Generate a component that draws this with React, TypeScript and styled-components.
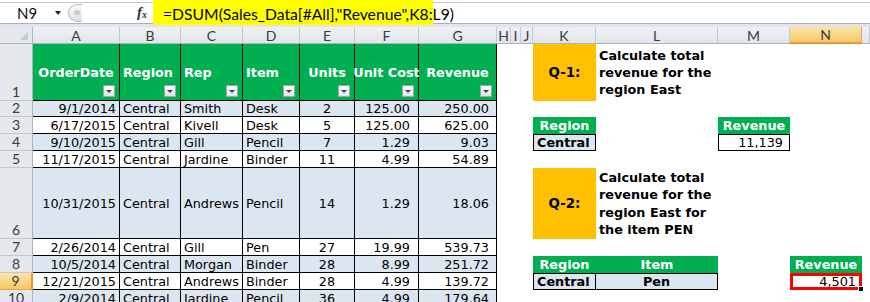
import React from "react";
import styled, { createGlobalStyle, css } from "styled-components";

const GlobalStyle = createGlobalStyle`
  html, body {
    margin: 0;
    padding: 0;
    background: #ffffff;
    overflow: hidden;
  }
  body {
    font-family: "DejaVu Sans", Verdana, sans-serif;
  }
`;

type Align = "left" | "center" | "right";

const colWidths = [87, 61, 62, 57, 55, 64, 78, 14, 10, 12, 63, 122, 72, 72];
const rowHeights = [57, 16, 17, 17, 17, 71, 17, 17, 17, 17];
const letters = "ABCDEFGHIJKLMN".split("");

const activeCol = "N";
const activeRow = 9;

const headers: [string, Align][] = [
  ["OrderDate", "center"],
  ["Region", "left"],
  ["Rep", "left"],
  ["Item", "left"],
  ["Units", "center"],
  ["Unit Cost", "center"],
  ["Revenue", "center"],
];

const dataCols: { align: Align; pad?: number }[] = [
  { align: "right" },
  { align: "left" },
  { align: "left" },
  { align: "left" },
  { align: "center" },
  { align: "right", pad: 8 },
  { align: "right", pad: 7 },
];

const sales = [
  ["9/1/2014", "Central", "Smith", "Desk", "2", "125.00", "250.00"],
  ["6/17/2015", "Central", "Kivell", "Desk", "5", "125.00", "625.00"],
  ["9/10/2015", "Central", "Gill", "Pencil", "7", "1.29", "9.03"],
  ["11/17/2015", "Central", "Jardine", "Binder", "11", "4.99", "54.89"],
  ["10/31/2015", "Central", "Andrews", "Pencil", "14", "1.29", "18.06"],
  ["2/26/2014", "Central", "Gill", "Pen", "27", "19.99", "539.73"],
  ["10/5/2014", "Central", "Morgan", "Binder", "28", "8.99", "251.72"],
  ["12/21/2015", "Central", "Andrews", "Binder", "28", "4.99", "139.72"],
  ["2/9/2014", "Central", "Jardine", "Pencil", "36", "4.99", "179.64"],
];

const Window = styled.div`
  width: 870px;
  height: 302px;
  overflow: hidden;
`;

const FormulaRow = styled.div`
  display: flex;
  align-items: center;
  height: 24px;
  box-sizing: border-box;
  border-bottom: 1px solid #a9b1bb;
  background: linear-gradient(#ffffff 0 2px, #c4c9d0 2px 3px, #ffffff 3px);
`;

const NameBox = styled.div`
  display: flex;
  align-items: center;
  justify-content: space-between;
  width: 64px;
  height: 100%;
  box-sizing: border-box;
  padding: 2px 3px 0 17px;
  font-family: Lato, "Liberation Sans", sans-serif;
  font-size: 15px;
  color: #111;
`;

const Caret = styled.span`
  width: 0;
  height: 0;
  border-left: 3.5px solid transparent;
  border-right: 3.5px solid transparent;
  border-top: 4px solid #222;
`;

const Splitter = styled.span`
  position: relative;
  margin: 2px 0 0 4px;
  width: 14px;
  height: 18px;
  box-sizing: border-box;
  border: 1px solid #b4b9c0;
  border-right: none;
  border-radius: 9px 0 0 9px;
  background: linear-gradient(#fbfbfb, #dcdfe3);
  &::after {
    content: "";
    position: absolute;
    left: 5px;
    top: 5px;
    width: 6px;
    height: 5px;
    border-radius: 50%;
    background: #c9ccd1;
  }
`;

const Fx = styled.span`
  margin: 2px 0 0 55px;
  font-family: "Liberation Serif", serif;
  font-style: italic;
  font-weight: bold;
  font-size: 15px;
  color: #333;
  sub {
    font-size: 10px;
    vertical-align: -1px;
  }
`;

const Formula = styled.div`
  align-self: stretch;
  margin: 0 0 -2px 6px;
  width: 280px;
  box-sizing: border-box;
  padding: 2px 0 0 10px;
  display: flex;
  align-items: center;
  background: #ffff00;
  font-family: Lato, "Liberation Sans", sans-serif;
  font-size: 15.7px;
  color: #000;
  white-space: nowrap;
`;

const Spacer = styled.div`
  height: 3px;
  background: #e1e5ea;
`;

const Sheet = styled.div`
  display: grid;
  grid-template-columns: 33px ${colWidths.map((w) => `${w}px`).join(" ")} 1fr;
  grid-template-rows: 17px ${rowHeights.map((h) => `${h}px`).join(" ")};
`;

const Corner = styled.div`
  position: relative;
  background: #e4e8ed;
  border-right: 1px solid #a9b4c2;
  border-bottom: 1px solid #a9b4c2;
  &::after {
    content: "";
    position: absolute;
    right: 4px;
    bottom: 3px;
    border-left: 8px solid transparent;
    border-bottom: 8px solid #c6cad0;
  }
`;

const activeHead = css`
  background: linear-gradient(#fbe4ab, #f6c865);
  border-color: #e2a848;
`;

const ColHead = styled.div<{ $active?: boolean }>`
  display: flex;
  align-items: center;
  justify-content: center;
  box-sizing: border-box;
  font-family: Lato, "Liberation Sans", sans-serif;
  font-size: 14px;
  color: #3b3b3b;
  background: linear-gradient(#eef1f4, #e1e5ea);
  border-right: 1px solid #c2c8d0;
  border-bottom: 1px solid #a9b4c2;
  ${(p) => p.$active && activeHead}
  ${(p) => p.$active && "border-bottom: 2px solid #f29436;"}
`;

const RowHead = styled.div<{ $active?: boolean }>`
  display: flex;
  align-items: flex-end;
  justify-content: center;
  box-sizing: border-box;
  font-family: Lato, "Liberation Sans", sans-serif;
  font-size: 14px;
  line-height: 16px;
  color: #3b3b3b;
  background: #e4e8ed;
  border-right: 1px solid #a9b4c2;
  border-bottom: 1px solid #c2c8d0;
  ${(p) => p.$active && activeHead}
  ${(p) => p.$active && "border-right: 2px solid #f29436;"}
`;

const Cell = styled.div<{ $align?: Align; $bg?: string; $bold?: boolean; $pad?: number }>`
  position: relative;
  display: flex;
  align-items: center;
  justify-content: ${(p) =>
    p.$align === "right" ? "flex-end" : p.$align === "center" ? "center" : "flex-start"};
  box-sizing: border-box;
  min-width: 0;
  padding: ${(p) => (p.$align === "center" ? "0" : `0 ${p.$pad ?? 3}px 0 3px`)};
  background: ${(p) => p.$bg ?? "#ffffff"};
  font-size: 12.8px;
  font-weight: ${(p) => (p.$bold ? "bold" : "normal")};
  color: #000;
  white-space: nowrap;
`;

const TableCell = styled(Cell)`
  border-right: 1px solid #000;
  border-bottom: 1px solid #000;
`;

const HeadCell = styled(TableCell)`
  background: #00b050;
  color: #ffffff;
  font-weight: bold;
`;

const Drop = styled.span`
  position: absolute;
  right: 4px;
  bottom: 3px;
  width: 12px;
  height: 12px;
  box-sizing: border-box;
  border: 1px solid #a5a5a5;
  background: linear-gradient(#fafafa, #e3e3e3);
  display: flex;
  align-items: center;
  justify-content: center;
  &::after {
    content: "";
    border-left: 3px solid transparent;
    border-right: 3px solid transparent;
    border-top: 3px solid #444;
  }
`;

const Blank = styled.div`
  background: #ffffff;
`;

const Tag = styled(Cell)`
  justify-content: center;
  background: #ffc000;
  font-weight: bold;
  font-size: 13.4px;
`;

const Question = styled(Cell)`
  flex-direction: column;
  align-items: flex-start;
  justify-content: center;
  font-weight: bold;
  line-height: 17.3px;
  z-index: 1;
`;

const Label = styled(Cell)`
  justify-content: center;
  background: #00b050;
  color: #ffffff;
  font-weight: bold;
`;

const Value = styled(Cell)<{ $open?: boolean }>`
  border: 1px solid #000;
  ${(p) => p.$open && "border-left: none;"}
`;

const Result = styled(Cell)`
  justify-content: flex-end;
  padding: 0 3px 0 0;
  border: 3px solid #ff0000;
`;

const FillHandle = styled.span`
  position: absolute;
  right: -4px;
  bottom: -4px;
  width: 4px;
  height: 4px;
  background: #000;
  border-left: 1px solid #fff;
  border-top: 1px solid #fff;
`;

const BLUE = "#dce6f1";

const blanks = (row: number, from: number, to: number) =>
  letters.slice(from, to).map((l) => <Blank key={`${l}${row}`} />);

const sideCells = (row: number): React.ReactNode[] => {
  switch (row) {
    case 3:
      return [
        <Label key="K3">Region</Label>,
        <Blank key="L3" />,
        <Label key="M3">Revenue</Label>,
        <Blank key="N3" />,
      ];
    case 4:
      return [
        <Value key="K4" $bg={BLUE} $bold>
          Central
        </Value>,
        <Blank key="L4" />,
        <Value key="M4" $align="right" $pad={6}>
          11,139
        </Value>,
        <Blank key="N4" />,
      ];
    case 6:
      return [
        <Tag key="K6">Q-2:</Tag>,
        <Question key="L6">
          <span>Calculate total</span>
          <span>revenue for the</span>
          <span>region East for</span>
          <span>the item PEN</span>
        </Question>,
        <Blank key="M6" />,
        <Blank key="N6" />,
      ];
    case 8:
      return [
        <Label key="K8">Region</Label>,
        <Label key="L8">Item</Label>,
        <Blank key="M8" />,
        <Label key="N8">Revenue</Label>,
      ];
    case 9:
      return [
        <Value key="K9" $bg={BLUE} $bold>
          Central
        </Value>,
        <Value key="L9" $bg={BLUE} $bold $align="center" $open>
          Pen
        </Value>,
        <Blank key="M9" />,
        <Result key="N9">
          4,501
          <FillHandle />
        </Result>,
      ];
    default:
      return blanks(row, 10, 14);
  }
};

const App = () => {
  return (
    <Window>
      <GlobalStyle />
      <FormulaRow>
        <NameBox>
          N9
          <Caret />
        </NameBox>
        <Splitter />
        <Fx>
          f<sub>x</sub>
        </Fx>
        <Formula>=DSUM(Sales_Data[#All],"Revenue",K8:L9)</Formula>
      </FormulaRow>
      <Spacer />
      <Sheet>
        <Corner />
        {letters.map((l) => (
          <ColHead key={l} $active={l === activeCol}>
            {l}
          </ColHead>
        ))}
        <ColHead />

        <RowHead>1</RowHead>
        {headers.map(([title, align]) => (
          <HeadCell key={title} $align={align}>
            {title}
            <Drop />
          </HeadCell>
        ))}
        {blanks(1, 7, 10)}
        <Tag>Q-1:</Tag>
        <Question>
          <span>Calculate total</span>
          <span>revenue for the</span>
          <span>region East</span>
        </Question>
        <Blank />
        <Blank />
        <Blank />

        {sales.map((rec, i) => {
          const row = i + 2;
          const bg = row % 2 === 0 ? BLUE : "#ffffff";
          return (
            <React.Fragment key={row}>
              <RowHead $active={row === activeRow}>{row}</RowHead>
              {rec.map((v, c) => (
                <TableCell key={c} $bg={bg} $align={dataCols[c].align} $pad={dataCols[c].pad}>
                  {v}
                </TableCell>
              ))}
              {blanks(row, 7, 10)}
              {sideCells(row)}
              <Blank />
            </React.Fragment>
          );
        })}
      </Sheet>
    </Window>
  );
};

export default App;
